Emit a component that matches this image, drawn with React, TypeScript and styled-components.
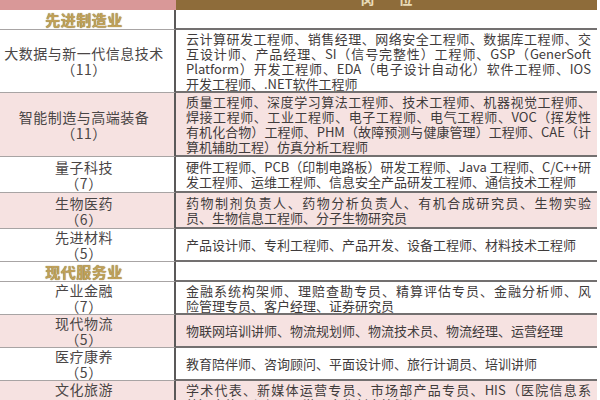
import React from 'react';
import styled, { createGlobalStyle } from 'styled-components';

const GlobalStyle = createGlobalStyle`
  html, body {
    margin: 0;
    padding: 0;
    background: #ffffff;
    overflow: hidden;
  }
  body {
    font-family: "Noto Sans CJK SC", "Noto Sans", sans-serif;
    color: #3d3b3b;
  }
`;

const PINK = '#f6e2e1';

interface Job {
  area: string;
  count: string;
  lines: string[];
  pink?: boolean;
  height: number;
}

interface Section {
  title: string;
  jobs: Job[];
}

const sections: Section[] = [
  {
    title: '先进制造业',
    jobs: [
      {
        area: '大数据与新一代信息技术',
        count: '（11）',
        height: 63,
        lines: [
          '云计算研发工程师、销售经理、网络安全工程师、数据库工程师、交',
          '互设计师、产品经理、SI（信号完整性）工程师、GSP（GenerSoft',
          'Platform）开发工程师、EDA（电子设计自动化）软件工程师、IOS',
          '开发工程师、.NET软件工程师',
        ],
      },
      {
        area: '智能制造与高端装备',
        count: '（11）',
        height: 64,
        pink: true,
        lines: [
          '质量工程师、深度学习算法工程师、技术工程师、机器视觉工程师、',
          '焊接工程师、工业工程师、电子工程师、电气工程师、VOC（挥发性',
          '有机化合物）工程师、PHM（故障预测与健康管理）工程师、CAE（计',
          '算机辅助工程）仿真分析工程师',
        ],
      },
      {
        area: '量子科技',
        count: '（7）',
        height: 36,
        lines: [
          '硬件工程师、PCB（印制电路板）研发工程师、Java 工程师、C/C++研',
          '发工程师、运维工程师、信息安全产品研发工程师、通信技术工程师',
        ],
      },
      {
        area: '生物医药',
        count: '（6）',
        height: 36,
        pink: true,
        lines: [
          '药物制剂负责人、药物分析负责人、有机合成研究员、生物实验',
          '员、生物信息工程师、分子生物研究员',
        ],
      },
      {
        area: '先进材料',
        count: '（5）',
        height: 33,
        lines: ['产品设计师、专利工程师、产品开发、设备工程师、材料技术工程师'],
      },
    ],
  },
  {
    title: '现代服务业',
    jobs: [
      {
        area: '产业金融',
        count: '（7）',
        height: 33,
        lines: [
          '金融系统构架师、理赔查勘专员、精算评估专员、金融分析师、风',
          '险管理专员、客户经理、证券研究员',
        ],
      },
      {
        area: '现代物流',
        count: '（5）',
        height: 33,
        pink: true,
        lines: ['物联网培训讲师、物流规划师、物流技术员、物流经理、运营经理'],
      },
      {
        area: '医疗康养',
        count: '（5）',
        height: 33,
        lines: ['教育陪伴师、咨询顾问、平面设计师、旅行计调员、培训讲师'],
      },
      {
        area: '文化旅游',
        count: '（6）',
        height: 33,
        pink: true,
        lines: [
          '学术代表、新媒体运营专员、市场部产品专员、HIS（医院信息系',
          '统）实施工程师、导游、文化创意策划师',
        ],
      },
    ],
  },
];

const Table = styled.div`
  width: 597px;
  display: flex;
  flex-direction: column;
`;

const Row = styled.div<{ $h: number; $pink?: boolean }>`
  display: grid;
  grid-template-columns: 176px 1fr;
  height: ${(p) => p.$h}px;
  background: ${(p) => (p.$pink ? PINK : '#ffffff')};
  flex-shrink: 0;
`;

const HeadLeft = styled.div`
  background: #d99898;
`;

const HeadRight = styled.div`
  background: #8e6c3a;
  display: flex;
  justify-content: center;
  align-items: flex-end;
  overflow: hidden;
`;

const HeadText = styled.span`
  color: #eadcb8;
  font-size: 14px;
  font-weight: 700;
  line-height: 16px;
  letter-spacing: 24px;
  margin-bottom: 4px;
  padding-left: 24px;
`;

const AreaCell = styled.div`
  border-right: 2px solid #5b5959;
  border-bottom: 1px solid #a8a4a4;
  display: flex;
  flex-direction: column;
  align-items: center;
  justify-content: center;
  padding-right: 6px;
  font-size: 14px;
  letter-spacing: 0.5px;
  line-height: 16px;
  color: #4a4646;
  overflow: hidden;
`;

const SectionTitle = styled.span`
  font-size: 15px;
  font-weight: 700;
  line-height: 18px;
  color: #c1a158;
  letter-spacing: 0.5px;
  text-shadow: 0 0 1px #6d5a2a;
`;

const JobCell = styled.div`
  border-bottom: 2px solid #737070;
  display: flex;
  flex-direction: column;
  justify-content: center;
  padding: 0 6px 0 10px;
  overflow: hidden;
`;

const JobLine = styled.span<{ $last?: boolean }>`
  display: block;
  font-size: 13px;
  line-height: 15px;
  color: #3f3b3b;
  text-align: justify;
  text-align-last: ${(p) => (p.$last ? 'left' : 'justify')};
  white-space: nowrap;
`;

function JobRow({ job }: { job: Job }) {
  return (
    <Row $h={job.height} $pink={job.pink}>
      <AreaCell>
        <span>{job.area}</span>
        <span>{job.count}</span>
      </AreaCell>
      <JobCell>
        {job.lines.map((line, i) => (
          <JobLine key={i} $last={i === job.lines.length - 1}>
            {line}
          </JobLine>
        ))}
      </JobCell>
    </Row>
  );
}

export default function App() {
  return (
    <>
      <GlobalStyle />
      <Table>
        <Row $h={10}>
          <HeadLeft />
          <HeadRight>
            <HeadText>岗位</HeadText>
          </HeadRight>
        </Row>
        {sections.map((section) => (
          <React.Fragment key={section.title}>
            <Row $h={20}>
              <AreaCell>
                <SectionTitle>{section.title}</SectionTitle>
              </AreaCell>
              <JobCell />
            </Row>
            {section.jobs.map((job) => (
              <JobRow key={job.area} job={job} />
            ))}
          </React.Fragment>
        ))}
      </Table>
    </>
  );
}
